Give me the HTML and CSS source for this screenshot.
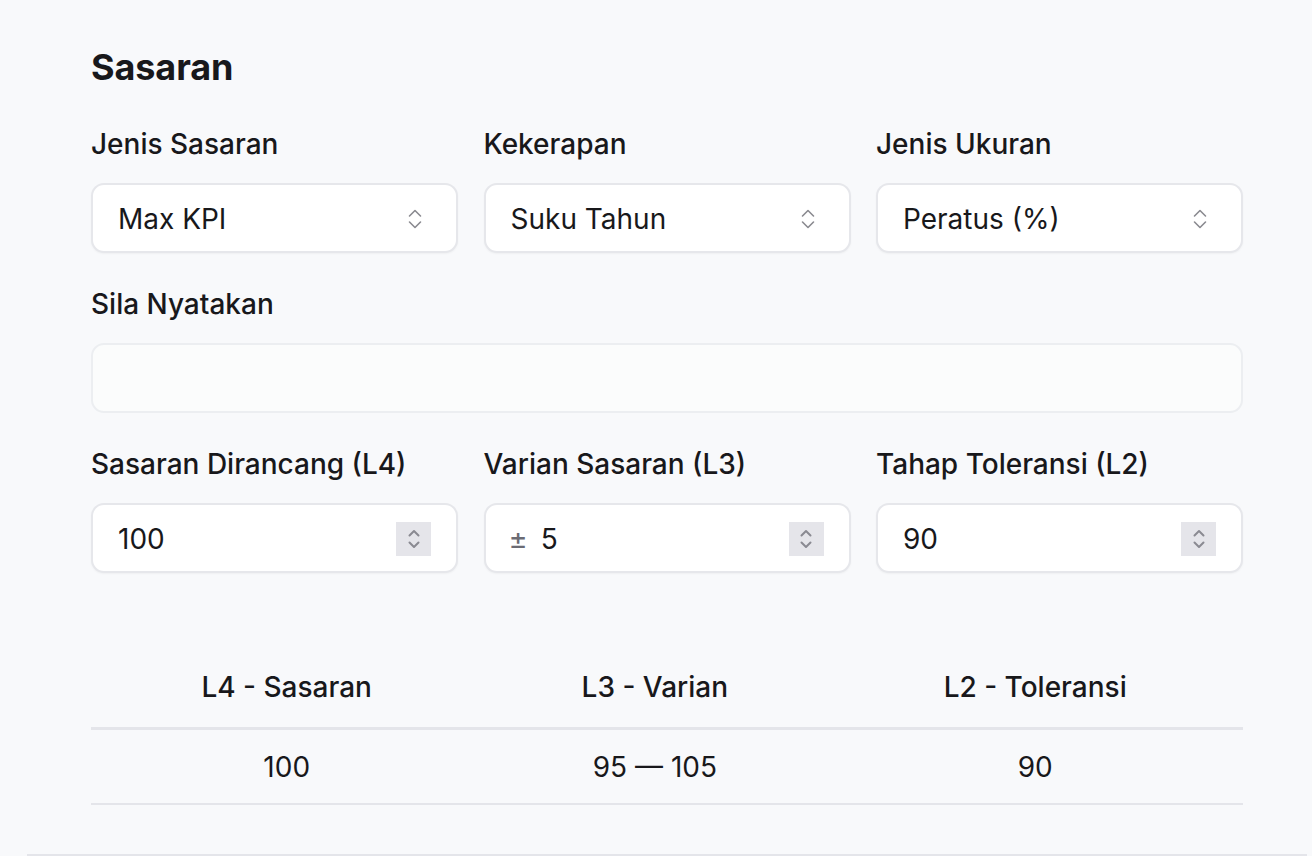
FILE: index.html
```html
<!DOCTYPE html>
<html lang="ms">
<head>
<meta charset="utf-8">
<title>Sasaran</title>
<link rel="stylesheet" href="styles.css">
</head>
<body>
<section class="panel">
  <h2 class="title">Sasaran</h2>

  <div class="grid">
    <div class="field">
      <label class="label">Jenis Sasaran</label>
      <div class="control">
        <span class="value">Max KPI</span>
        <svg class="updown" width="16" height="22" viewBox="0 0 16 22"><path d="M2.5 8 L8 2.5 L13.5 8 M2.5 14 L8 19.5 L13.5 14" fill="none" stroke="#8a8a90" stroke-width="1.6" stroke-linecap="round" stroke-linejoin="round"/></svg>
      </div>
    </div>
    <div class="field">
      <label class="label">Kekerapan</label>
      <div class="control">
        <span class="value">Suku Tahun</span>
        <svg class="updown" width="16" height="22" viewBox="0 0 16 22"><path d="M2.5 8 L8 2.5 L13.5 8 M2.5 14 L8 19.5 L13.5 14" fill="none" stroke="#8a8a90" stroke-width="1.6" stroke-linecap="round" stroke-linejoin="round"/></svg>
      </div>
    </div>
    <div class="field">
      <label class="label">Jenis Ukuran</label>
      <div class="control">
        <span class="value">Peratus (%)</span>
        <svg class="updown" width="16" height="22" viewBox="0 0 16 22"><path d="M2.5 8 L8 2.5 L13.5 8 M2.5 14 L8 19.5 L13.5 14" fill="none" stroke="#8a8a90" stroke-width="1.6" stroke-linecap="round" stroke-linejoin="round"/></svg>
      </div>
    </div>

    <div class="field wide">
      <label class="label">Sila Nyatakan</label>
      <div class="control muted"></div>
    </div>

    <div class="field">
      <label class="label">Sasaran Dirancang (L4)</label>
      <div class="control">
        <span class="value">100</span>
        <span class="spin"><svg width="14" height="22" viewBox="0 0 14 22"><path d="M2.5 7.5 L7 3 L11.5 7.5 M2.5 14.5 L7 19 L11.5 14.5" fill="none" stroke="#8a8a92" stroke-width="2" stroke-linecap="round" stroke-linejoin="round"/></svg></span>
      </div>
    </div>
    <div class="field">
      <label class="label">Varian Sasaran (L3)</label>
      <div class="control">
        <span class="prefix">±</span>
        <span class="value">5</span>
        <span class="spin"><svg width="14" height="22" viewBox="0 0 14 22"><path d="M2.5 7.5 L7 3 L11.5 7.5 M2.5 14.5 L7 19 L11.5 14.5" fill="none" stroke="#8a8a92" stroke-width="2" stroke-linecap="round" stroke-linejoin="round"/></svg></span>
      </div>
    </div>
    <div class="field">
      <label class="label">Tahap Toleransi (L2)</label>
      <div class="control">
        <span class="value">90</span>
        <span class="spin"><svg width="14" height="22" viewBox="0 0 14 22"><path d="M2.5 7.5 L7 3 L11.5 7.5 M2.5 14.5 L7 19 L11.5 14.5" fill="none" stroke="#8a8a92" stroke-width="2" stroke-linecap="round" stroke-linejoin="round"/></svg></span>
      </div>
    </div>
  </div>

  <table class="summary">
    <thead>
      <tr><th>L4 - Sasaran</th><th>L3 - Varian</th><th>L2 - Toleransi</th></tr>
    </thead>
    <tbody>
      <tr><td>100</td><td>95 — 105</td><td>90</td></tr>
    </tbody>
  </table>
</section>
</body>
</html>
```

FILE: styles.css
```css
html, body {
  margin: 0;
  padding: 0;
  background: #f8f9fb;
}

body {
  font-family: Inter, "Noto Sans", "Liberation Sans", sans-serif;
  color: #18181b;
}

.panel {
  width: 1280px;
  margin-left: 27px;
  box-sizing: border-box;
  padding: 43px 64px 49px;
  border-bottom: 2px solid #e4e5ea;
}

.title {
  margin: 0 0 33px;
  font-size: 36px;
  line-height: 48px;
  font-weight: 700;
  letter-spacing: -0.1px;
}

.grid {
  display: grid;
  grid-template-columns: repeat(3, 1fr);
  column-gap: 25.5px;
  row-gap: 31px;
}

.field {
  display: flex;
  flex-direction: column;
  gap: 19px;
}

.field.wide {
  grid-column: 1 / -1;
}

.label {
  font-size: 28px;
  line-height: 40px;
  font-weight: 500;
}

.control {
  height: 70px;
  box-sizing: border-box;
  display: flex;
  align-items: center;
  padding: 1px 25px 0 25px;
  background: #ffffff;
  border: 2px solid #e6e7eb;
  border-radius: 13px;
  box-shadow: 0 1px 2px rgba(0, 0, 0, 0.04);
}

.control.muted {
  background: #fbfcfc;
  box-shadow: none;
  border-color: #eceef1;
}

.value {
  flex: 1;
  font-size: 28px;
  line-height: 40px;
  font-weight: 400;
}

.prefix {
  font-size: 29px;
  line-height: 40px;
  color: #6b6b73;
  margin-left: -2px;
  margin-right: 13px;
}

.updown {
  margin-right: 8px;
}

.spin {
  width: 35px;
  height: 34px;
  background: #e5e5ea;
  display: flex;
  align-items: center;
  justify-content: center;
}

.summary {
  width: 100%;
  margin-top: 74px;
  border-collapse: collapse;
  font-size: 28px;
  line-height: 40px;
}

.summary th {
  font-weight: 500;
  padding: 20px 16px;
  border-bottom: 3px solid #e4e5ea;
}

.summary td {
  text-align: center;
  padding: 17px 16px 16px;
  border-bottom: 2px solid #e4e5ea;
}
```
